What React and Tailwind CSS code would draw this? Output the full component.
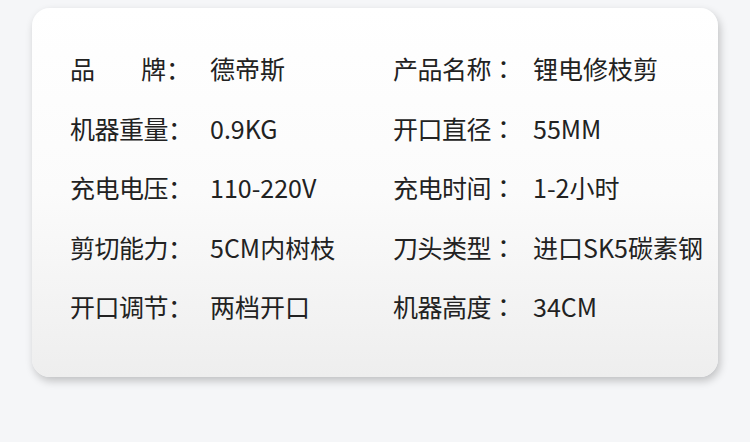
import React from 'react'

const rows = [
  [['品', '牌'], '德帝斯', '产品名称', '锂电修枝剪'],
  ['机器重量', '0.9KG', '开口直径', '55MM'],
  ['充电电压', '110-220V', '充电时间', '1-2小时'],
  ['剪切能力', '5CM内树枝', '刀头类型', '进口SK5碳素钢'],
  ['开口调节', '两档开口', '机器高度', '34CM'],
]

function Label({ text, centered }) {
  const colon = centered
    ? <span style={{ fontFamily: '"Noto Sans CJK JP", sans-serif' }}>：</span>
    : <span>：</span>
  if (Array.isArray(text)) {
    return (
      <span className="flex w-[140px] shrink-0">
        <span className="flex w-[96px] justify-between">
          <span>{text[0]}</span>
          <span>{text[1]}</span>
        </span>
        {colon}
      </span>
    )
  }
  return (
    <span className="w-[140px] shrink-0 tracking-[-0.5px]">
      {text}
      {colon}
    </span>
  )
}

export default function App() {
  return (
    <div
      className="w-[750px] h-[442px] bg-[#f5f6f8] pt-[8px] pl-[32px]"
      style={{ fontFamily: '"Noto Sans CJK SC", "Noto Sans", sans-serif' }}
    >
      <div className="w-[686px] h-[369px] rounded-[18px] bg-gradient-to-b from-white via-[#fbfbfb] to-[#eeeeee] shadow-[2px_4px_8px_rgba(0,0,0,0.22)] pl-[38px] pt-[31px]">
        {rows.map((r, i) => (
          <div key={i} className="flex h-[59.5px] items-center text-[25px] text-[#222] leading-none">
            <div className="flex w-[323px]">
              <Label text={r[0]} />
              <span>{r[1]}</span>
            </div>
            <div className="flex">
              <Label text={r[2]} centered />
              <span>{r[3]}</span>
            </div>
          </div>
        ))}
      </div>
    </div>
  )
}
